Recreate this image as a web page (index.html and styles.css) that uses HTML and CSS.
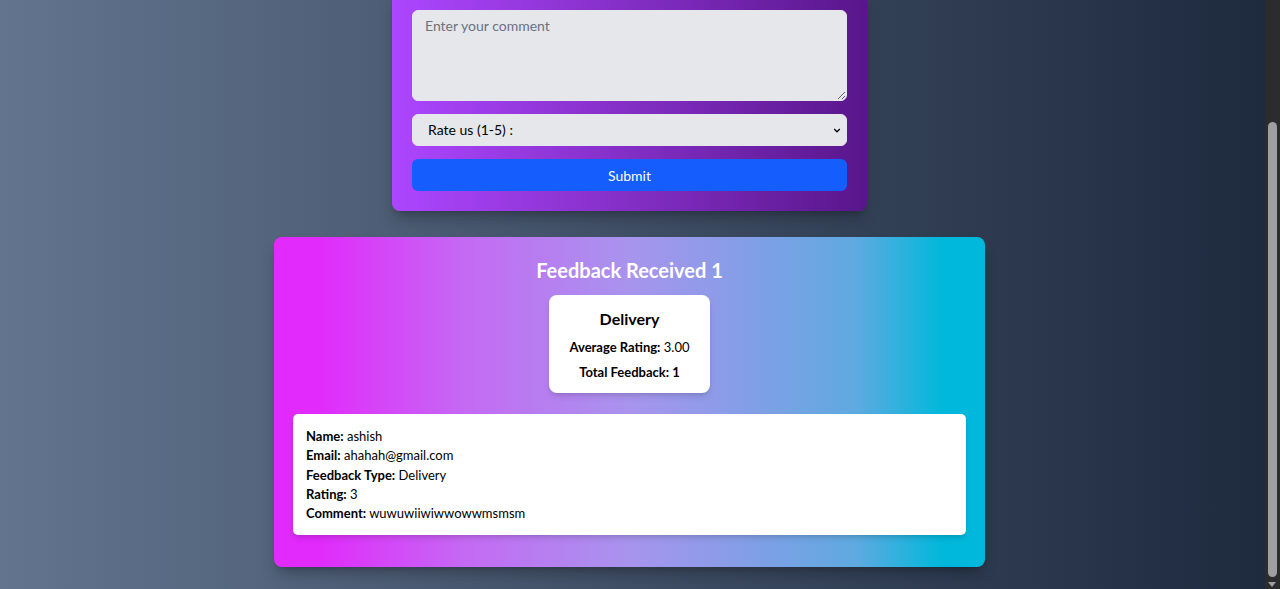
FILE: index.html
```html
<!DOCTYPE html>
<html lang="en">
<head>
<meta charset="utf-8">
<title>Feedback</title>
<link rel="stylesheet" href="styles.css">
</head>
<body>
<div class="page">
  <main class="column">
    <form class="form-card">
      <textarea class="field area" placeholder="Enter your comment"></textarea>
      <div class="select-wrap"><select class="field select"><option>Rate us (1-5) :</option></select></div>
      <button class="submit" type="button">Submit</button>
    </form>

    <section class="received">
      <h2 class="received-title">Feedback Received 1</h2>
      <div class="stats">
        <div class="stat-card">
          <h3 class="stat-name">Delivery</h3>
          <p class="stat-line"><b>Average Rating:</b> 3.00</p>
          <p class="stat-line"><b>Total Feedback: 1</b></p>
        </div>
      </div>
      <div class="entry">
        <p class="entry-line"><b>Name:</b> ashish</p>
        <p class="entry-line"><b>Email:</b> ahahah@gmail.com</p>
        <p class="entry-line"><b>Feedback Type:</b> Delivery</p>
        <p class="entry-line"><b>Rating:</b> 3</p>
        <p class="entry-line"><b>Comment:</b> wuwuwiiwiwwowwmsmsm</p>
      </div>
    </section>
  </main>
  <div class="scrollbar" aria-hidden="true">
    <div class="thumb"></div>
    <div class="arrow-down"></div>
  </div>
</div>
</body>
</html>
```
FILE: styles.css
```css
* { box-sizing: border-box; }
html, body { margin: 0; padding: 0; }
body {
  font-family: "Segoe UI", Lato, "Noto Sans", sans-serif;
  color: #000;
}
.page {
  position: relative;
  height: 589px;
  overflow: hidden;
  background: linear-gradient(to right, #62748e, #1d293d);
  padding-right: 21px;
}
.column {
  display: flex;
  flex-direction: column;
  align-items: center;
}
.form-card {
  width: 475px;
  margin-top: -10px;
  padding: 20px;
  border-radius: 0 0 8px 8px;
  background: linear-gradient(to right, #ad46ff, #59168b);
  box-shadow: 0 10px 15px -3px rgba(0,0,0,.25), 0 4px 6px -4px rgba(0,0,0,.2);
  display: flex;
  flex-direction: column;
  gap: 13px;
}
.field {
  display: block;
  width: 100%;
  height: 40px;
  border: 1px solid #e5e7eb;
  border-radius: 6px;
  background: #e5e7eb;
  font: inherit;
  font-size: 14px;
  color: #000;
  padding: 8px 12px;
  outline: none;
}
.field::placeholder { color: #6b7280; }
.area {
  height: 91px;
  resize: vertical;
  padding: 6px 12px;
  line-height: 18px;
}
.select-wrap { position: relative; }
.select {
  height: 32px;
  appearance: none;
  -webkit-appearance: none;
  padding: 0 15px;
  line-height: 30px;
  background-image: url("data:image/svg+xml;utf8,<svg xmlns='http://www.w3.org/2000/svg' width='10' height='6' viewBox='0 0 10 6'><path d='M1.5 1.2 L5 4.6 L8.5 1.2' fill='none' stroke='%23000' stroke-width='1.6'/></svg>");
  background-repeat: no-repeat;
  background-position: right 5px center;
  background-size: 8px 5px;
}
.submit {
  height: 32px;
  border: 0;
  border-radius: 6px;
  background: #155dfc;
  color: #fff;
  font: inherit;
  font-size: 14px;
}
.received {
  width: 711px;
  margin-top: 26px;
  padding: 19px 19px 32px;
  border-radius: 8px;
  background: linear-gradient(to right, #e12afb 6%, #c46af3 27%, #a894ed 50%, #8e9be8 62%, #5eaae0 82%, #00b8db 94%);
  box-shadow: 0 10px 15px -3px rgba(0,0,0,.25), 0 4px 6px -4px rgba(0,0,0,.2);
}
.received-title {
  margin: 0 0 11px;
  font-size: 20px;
  line-height: 28px;
  color: #fff;
  text-align: center;
}
.stats {
  display: flex;
  justify-content: center;
  margin-bottom: 21px;
}
.stat-card {
  width: 161px;
  padding: 12px 8px 11px;
  background: #fff;
  border-radius: 8px;
  box-shadow: 0 4px 6px -1px rgba(0,0,0,.12), 0 2px 4px -2px rgba(0,0,0,.1);
  text-align: center;
}
.stat-name {
  margin: 0 0 6px;
  font-size: 16px;
  line-height: 24px;
}
.stat-line {
  margin: 0;
  font-size: 13px;
  line-height: 20px;
}
.stat-line + .stat-line { margin-top: 5px; }
.entry {
  background: #fff;
  border-radius: 5px;
  padding: 13px 13px 12px;
  box-shadow: 0 4px 6px -1px rgba(0,0,0,.12), 0 2px 4px -2px rgba(0,0,0,.1);
}
.entry-line {
  margin: 0;
  font-size: 13px;
  line-height: 19.25px;
}
.scrollbar {
  position: absolute;
  top: 0;
  right: 0;
  width: 15px;
  height: 589px;
  background: #2c2c2c;
}
.thumb {
  position: absolute;
  top: 122px;
  left: 3px;
  width: 9px;
  height: 455px;
  border-radius: 5px;
  background: #9f9f9f;
}
.arrow-down {
  position: absolute;
  left: 3px;
  bottom: 2px;
  width: 0;
  height: 0;
  border-left: 4.5px solid transparent;
  border-right: 4.5px solid transparent;
  border-top: 5px solid #9f9f9f;
}
```
